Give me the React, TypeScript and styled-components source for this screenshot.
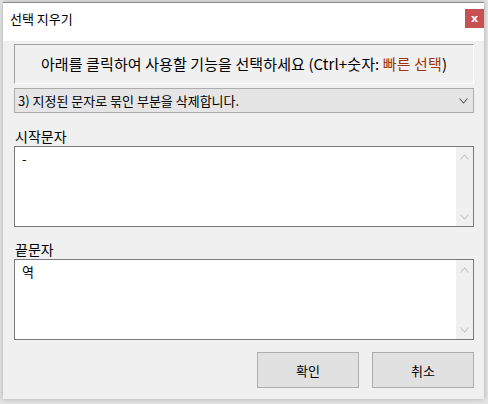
import React from "react";
import styled, { createGlobalStyle } from "styled-components";

const GlobalStyle = createGlobalStyle`
  html, body {
    margin: 0;
    padding: 0;
    background: #e4e4e4;
  }
  * {
    box-sizing: border-box;
  }
`;

const FONT = `"Noto Sans CJK KR", "Noto Sans", sans-serif`;

const Page = styled.div`
  width: 488px;
  height: 404px;
  padding: 2px 0 0 3px;
  overflow: hidden;
  font-family: ${FONT};
  color: #000;
`;

const Window = styled.div`
  width: 481px;
  height: 397px;
  background: #f0f0f0;
  border-top: 1px solid #8c8c8c;
  box-shadow: 0 0 5px rgba(0, 0, 0, 0.25);
  display: flex;
  flex-direction: column;
`;

const TitleBar = styled.div`
  height: 38px;
  background: #fff;
  display: flex;
  align-items: flex-start;
  justify-content: space-between;
  padding-left: 7px;
`;

const Title = styled.div`
  font-size: 13px;
  line-height: 16px;
  margin-top: 8px;
`;

const CloseButton = styled.button`
  width: 19px;
  height: 19px;
  margin-top: 6px;
  border: none;
  padding: 0;
  background: #c75050;
  color: #fff;
  font-family: "DejaVu Sans", sans-serif;
  font-size: 11px;
  font-weight: 700;
  line-height: 19px;
  display: flex;
  align-items: center;
  justify-content: center;
`;

const Content = styled.div`
  flex: 1;
  display: flex;
  flex-direction: column;
  padding: 3px 10px 0 11px;
`;

const Header = styled.div`
  height: 40px;
  border-top: 1px solid #a0a0a0;
  border-left: 1px solid #a0a0a0;
  border-right: 1px solid #fff;
  border-bottom: 1px solid #fff;
  display: flex;
  align-items: center;
  justify-content: center;
  font-size: 15px;
  letter-spacing: 0.1px;
  padding-bottom: 1px;
`;

const Hint = styled.span`
  color: #a0360c;
`;

const Select = styled.div`
  margin-top: 4px;
  height: 25px;
  border: 1px solid #adadad;
  background: #e5e5e5;
  display: flex;
  align-items: center;
  justify-content: space-between;
  padding: 0 5px 0 3px;
  font-size: 13px;
`;

const Label = styled.div<{ $top: number }>`
  margin-top: ${(p) => p.$top}px;
  height: 19px;
  font-size: 14px;
  line-height: 19px;
  padding-left: 1px;
`;

const Field = styled.div`
  height: 81px;
  border: 1px solid #7a7a7a;
  background: #fff;
  display: flex;
`;

const Input = styled.textarea`
  flex: 1;
  border: none;
  outline: none;
  resize: none;
  background: transparent;
  padding: 3px 7px;
  font-family: ${FONT};
  font-size: 13px;
  line-height: 18px;
  color: #000;
`;

const ScrollTrack = styled.div`
  width: 17px;
  background: #f0f0f0;
  display: flex;
  flex-direction: column;
  justify-content: space-between;
  align-items: center;
  padding: 7px 0 6px;
`;

const ButtonRow = styled.div`
  margin-top: 12px;
  display: flex;
  justify-content: flex-end;
  gap: 13px;
`;

const Button = styled.button`
  width: 102px;
  height: 36px;
  border: 1px solid #adadad;
  background: #e1e1e1;
  font-family: ${FONT};
  font-size: 13px;
  color: #000;
  padding: 0;
`;

const Chevron = ({ up, color }: { up?: boolean; color: string }) => (
  <svg width="9" height="6" viewBox="0 0 9 6">
    <path
      d={up ? "M0.5 5.5 L4.5 1 L8.5 5.5" : "M0.5 0.5 L4.5 5 L8.5 0.5"}
      fill="none"
      stroke={color}
      strokeWidth="1.1"
    />
  </svg>
);

const TextBox = ({ value }: { value: string }) => (
  <Field>
    <Input defaultValue={value} spellCheck={false} />
    <ScrollTrack>
      <Chevron up color="#c2c2c2" />
      <Chevron color="#c2c2c2" />
    </ScrollTrack>
  </Field>
);

export default function App() {
  return (
    <>
      <GlobalStyle />
      <Page>
        <Window>
          <TitleBar>
            <Title>선택 지우기</Title>
            <CloseButton>x</CloseButton>
          </TitleBar>
          <Content>
            <Header>
              <span>
                아래를 클릭하여 사용할 기능을 선택하세요 (Ctrl+숫자:{" "}
                <Hint>빠른 선택</Hint>)
              </span>
            </Header>
            <Select>
              <span>3) 지정된 문자로 묶인 부분을 삭제합니다.</span>
              <Chevron color="#5a5a5a" />
            </Select>
            <Label $top={14}>시작문자</Label>
            <TextBox value="-" />
            <Label $top={13}>끝문자</Label>
            <TextBox value="역" />
            <ButtonRow>
              <Button>확인</Button>
              <Button>취소</Button>
            </ButtonRow>
          </Content>
        </Window>
      </Page>
    </>
  );
}
